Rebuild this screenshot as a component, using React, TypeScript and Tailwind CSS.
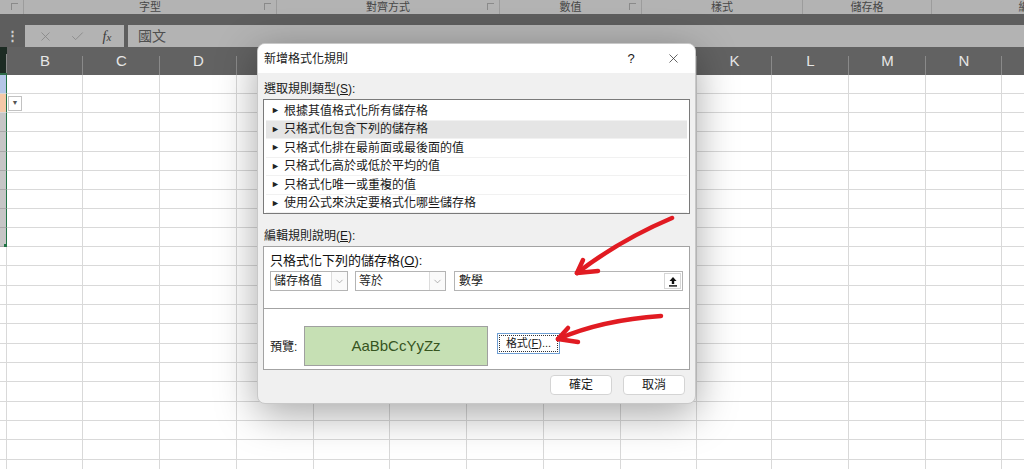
import React from 'react';
import { X, Check, ChevronDown } from 'lucide-react';

const cols = [
    { l: 'A', w: 7, show: false },
    { l: 'B', w: 76, show: true },
    { l: 'C', w: 77, show: true },
    { l: 'D', w: 77, show: true },
    { l: 'E', w: 77, show: false },
    { l: 'F', w: 76, show: false },
    { l: 'G', w: 77, show: false },
    { l: 'H', w: 77, show: false },
    { l: 'I', w: 77, show: false },
    { l: 'J', w: 76, show: false },
    { l: 'K', w: 75, show: true },
    { l: 'L', w: 77, show: true },
    { l: 'M', w: 77, show: true },
    { l: 'N', w: 76, show: true },
    { l: 'O', w: 77, show: false },
];

const rowHeights = [19, 19, 19, 20, 19, 19, 19, 19, 19, 19, 20, 19, 19, 20, 19, 19, 20, 19, 19, 20, 19];

const ribbonGroups = [
    { label: '', w: 24, launcher: true },
    { label: '字型', w: 253, launcher: true },
    { label: '對齊方式', w: 223, launcher: true },
    { label: '數值', w: 142, launcher: true },
    { label: '樣式', w: 161, launcher: false },
    { label: '儲存格', w: 129, launcher: false },
    { label: '編輯', w: 196, launcher: false },
];

const rules = [
    '根據其值格式化所有儲存格',
    '只格式化包含下列的儲存格',
    '只格式化排在最前面或最後面的值',
    '只格式化高於或低於平均的值',
    '只格式化唯一或重複的值',
    '使用公式來決定要格式化哪些儲存格',
];

// column A is the selected range: coloured cells with a green edge
const cellClass = (col: number, row: number) => {
    if (col !== 0) return 'relative shrink-0 border-b border-r border-[#d9d9d9] bg-white';
    if (row === 0) return 'relative shrink-0 border-b border-r border-[#d9d9d9] border-r-[#217346] bg-[#b4c6e7]';
    if (row === 1) return 'relative shrink-0 border-b border-r border-[#d9d9d9] border-r-[#217346] bg-[#f4c9a8]';
    if (row < 9) return 'relative shrink-0 border-b border-r border-[#a9a9a9] border-r-[#217346] bg-[#c6c6c6]';
    return 'relative shrink-0 border-b border-r border-[#d9d9d9] bg-white';
};

const Select: React.FC<{ text: string; w: string }> = ({ text, w }) => (
    <div className={`flex h-[20px] items-stretch border border-[#b4b4b4] bg-white ${w}`}>
        <span className="flex-1 pl-[3px] leading-[18px] text-[12px] text-[#222]">{text}</span>
        <span className="flex w-[16px] items-center justify-center border-l border-[#dcdcdc] bg-[#fafafa]">
            <ChevronDown size={11} strokeWidth={1.2} color="#777" />
        </span>
    </div>
);

export default function App() {
    return (
        <div className="relative h-[469px] w-[1024px] overflow-hidden bg-white font-['Liberation_Sans','Noto_Sans_CJK_TC',sans-serif]">
            {/* ribbon group labels */}
            <div className="flex h-[14px] bg-[#b3b3b3]">
                {ribbonGroups.map((g, i) => (
                    <div key={i} style={{ width: g.w }} className="relative flex shrink-0 items-center justify-center border-r border-[#9c9c9c] text-[11px] leading-none text-[#474747]">
                        {g.label}
                        {g.launcher && (
                            <span className="absolute right-[5px] top-[3px] h-[7px] w-[7px] border-l border-t border-[#8a8a8a]" />
                        )}
                    </div>
                ))}
            </div>
            <div className="h-[11px] bg-[#5e5e5e]" />

            {/* formula bar */}
            <div className="flex h-[22px] items-stretch bg-[#5e5e5e]">
                <div className="flex w-[25px] items-center justify-center text-[13px] font-bold text-[#cfcfcf]">⋮</div>
                <div className="flex w-[99px] items-center justify-around bg-[#b3b3b3] px-1">
                    <X size={15} strokeWidth={1.3} color="#858585" />
                    <Check size={15} strokeWidth={1.3} color="#858585" />
                    <span className="font-['Liberation_Serif',serif] text-[14px] italic text-[#3a3a3a]">
                        f<span className="text-[11px]">x</span>
                    </span>
                </div>
                <div className="ml-[4px] flex flex-1 items-center bg-[#b3b3b3] pl-[10px] text-[14px] text-[#4f4f4f]">國文</div>
            </div>

            {/* column headers */}
            <div className="flex h-[28px] bg-[#626262]">
                {cols.map((c, i) => (
                    <div
                        key={c.l}
                        style={{ width: c.w }}
                        className={
                            i === 0
                                ? 'relative flex shrink-0 border-b-2 border-[#2f6b48] bg-[#1c2b23]'
                                : 'relative flex shrink-0 items-end justify-center pb-[3px] text-[15px] text-[#e6e6e6]'
                        }
                    >
                        {c.show && c.l}
                        <span className="absolute bottom-0 right-0 h-[19px] w-px bg-[#8a8a8a]" />
                    </div>
                ))}
            </div>

            {/* grid */}
            <div className="flex flex-col">
                {rowHeights.map((h, r) => (
                    <div key={r} style={{ height: h }} className="flex shrink-0">
                        {cols.map((c, i) => (
                            <div key={c.l} style={{ width: c.w }} className={cellClass(i, r)}>
                                {i === 1 && r === 1 && (
                                    <span className="absolute left-[1px] top-[2px] flex h-[15px] w-[14px] items-center justify-center border border-[#c2c2c2] bg-white text-[7px] text-[#555]">▼</span>
                                )}
                                {i === 0 && r === 8 && (
                                    <span className="absolute -bottom-[3px] -right-[3px] h-[5px] w-[5px] bg-[#217346]" />
                                )}
                            </div>
                        ))}
                    </div>
                ))}
            </div>

            {/* dialog */}
            <div className="absolute left-[257px] top-[43px] flex h-[361px] w-[439px] flex-col overflow-hidden rounded-[8px] border border-[#c8c8c8] bg-[#f0f0f0] text-[12px] text-[#1a1a1a] shadow-[0_10px_40px_rgba(0,0,0,0.35)]">
                <div className="flex h-[29px] shrink-0 items-center bg-white pl-[6px]">
                    <span className="flex-1">新增格式化規則</span>
                    <span className="w-[40px] text-center text-[13px]">?</span>
                    <span className="flex w-[44px] items-center justify-center">
                        <X size={15} strokeWidth={1.2} color="#333" />
                    </span>
                </div>

                <div className="flex flex-1 flex-col px-[5px]">
                    <div className="pl-[1px] pt-[8px] leading-[17px]">
                        選取規則類型(<u>S</u>):
                    </div>
                    <div className="mt-[1px] h-[115px] border border-[#7a7a7a] bg-white p-[2px]">
                        {rules.map((r, i) => (
                            <div key={i} className={`flex h-[18.5px] items-center border-b border-[#f1f1f1] pl-[5px] ${i === 1 ? 'bg-[#e5e5e5]' : ''}`}>
                                <span className="mr-[4px] text-[9px] text-[#222]">►</span>
                                {r}
                            </div>
                        ))}
                    </div>

                    <div className="pl-[1px] pt-[14px] leading-[17px]">
                        編輯規則說明(<u>E</u>):
                    </div>
                    <div className="mt-[1px] flex h-[124px] flex-col border border-[#a3a3a3] bg-white">
                        <div className="flex h-[62px] shrink-0 flex-col border-b border-[#a3a3a3] px-[6px]">
                            <div className="pt-[5px] text-[13px] leading-[17px] text-[#111]">
                                只格式化下列的儲存格(<u>O</u>):
                            </div>
                            <div className="mt-[2px] flex items-center">
                                <Select text="儲存格值" w="w-[78px]" />
                                <div className="w-[7px]" />
                                <Select text="等於" w="w-[91px]" />
                                <div className="w-[8px]" />
                                <div className="flex h-[20px] flex-1 items-stretch border border-[#b4b4b4] bg-white">
                                    <span className="flex-1 pl-[4px] leading-[18px] text-[#222]">數學</span>
                                    <span className="m-px flex w-[17px] items-center justify-center border border-[#d6d6d6] bg-white">
                                        <svg width="10" height="11" viewBox="0 0 10 11">
                                            <path d="M5 1 L1.5 5 H3.8 V8 H6.2 V5 H8.5 Z" fill="#111" />
                                            <rect x="1" y="9.2" width="8" height="1.4" fill="#111" />
                                        </svg>
                                    </span>
                                </div>
                            </div>
                        </div>
                        <div className="flex flex-1 items-start px-[6px] pt-[17px]">
                            <span className="mt-[12px] w-[34px]">預覽:</span>
                            <div className="flex h-[40px] w-[184px] items-center justify-center border border-[#a0a0a0] bg-[#c6e0b4] font-['Liberation_Sans',sans-serif] text-[15px] text-[#36551f]">
                                AaBbCcYyZz
                            </div>
                            <div className="ml-[9px] mt-[7px] flex h-[21px] w-[63px] items-center justify-center border border-[#6f9fd3] bg-white p-px">
                                <span className="flex h-full w-full items-center justify-center border border-dotted border-[#333] text-[11px]">
                                    格式(<u>F</u>)...
                                </span>
                            </div>
                        </div>
                    </div>

                    <div className="mt-[5px] flex justify-end gap-[11px] pr-[5px]">
                        <span className="flex h-[20px] w-[62px] items-center justify-center rounded-[4px] border border-[#d4d4d4] bg-white">確定</span>
                        <span className="flex h-[20px] w-[62px] items-center justify-center rounded-[4px] border border-[#d4d4d4] bg-white">取消</span>
                    </div>
                </div>
            </div>

            {/* red hand-drawn arrows */}
            <svg className="pointer-events-none absolute left-0 top-0" width="1024" height="469" viewBox="0 0 1024 469">
                <g fill="none" stroke="#e11b22" strokeWidth="4.5" strokeLinecap="round" strokeLinejoin="round">
                    <path d="M672 218 Q620 240 577 273" />
                    <path d="M577 273 L583 260" />
                    <path d="M577 273 L598 271" />
                    <path d="M661 316 Q602 320 558 339" />
                    <path d="M558 339 L568 328" />
                    <path d="M558 339 L578 342" />
                </g>
            </svg>
        </div>
    );
}
